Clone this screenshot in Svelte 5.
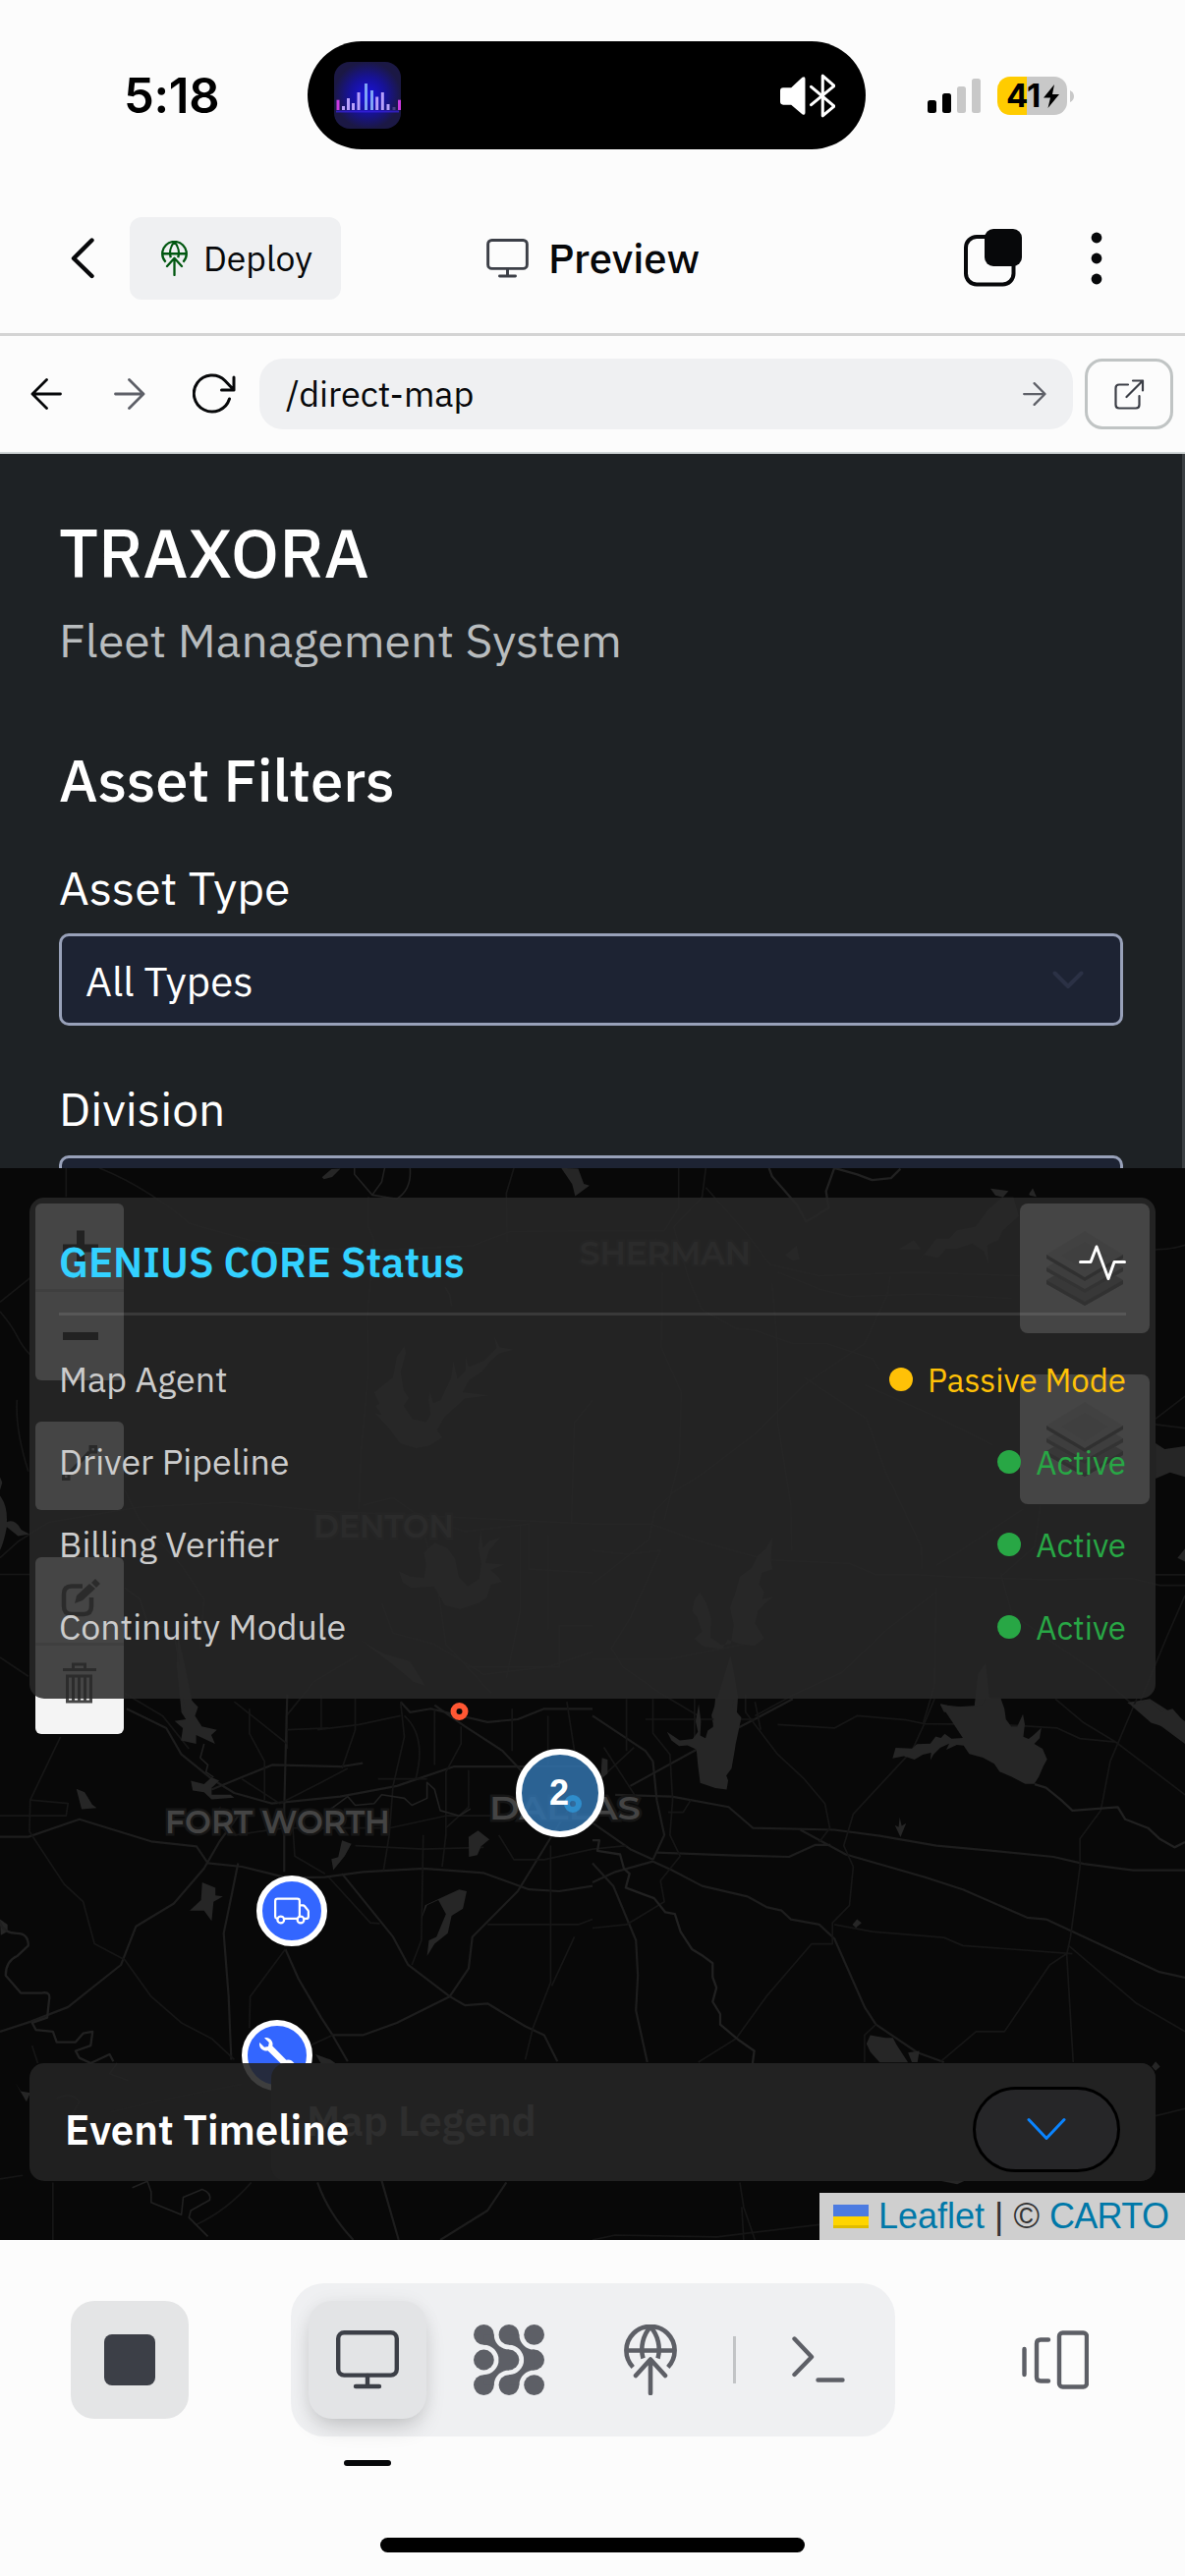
<script>
  const modules = [
    { name: 'Map Agent', state: 'Passive Mode', tone: 'passive' },
    { name: 'Driver Pipeline', state: 'Active', tone: 'active' },
    { name: 'Billing Verifier', state: 'Active', tone: 'active' },
    { name: 'Continuity Module', state: 'Active', tone: 'active' }
  ];

  // Equalizer bars of the playing app: [x, top]
  const bars = [
    [4, 38.7], [9.5, 45], [14.5, 37], [19.5, 42], [25, 31], [32.5, 22],
    [38.5, 29], [43.7, 35.5], [49.3, 31], [55, 43], [61, 46], [66.5, 38.7]
  ];
</script>

{#snippet monitor(cls, sw)}
  <svg class={cls} viewBox="0 0 64 60" fill="none" stroke="currentColor" stroke-width={sw} stroke-linecap="round">
    <rect x="2.2" y="2.2" width="59.6" height="43.4" rx="6" />
    <path d="M32 46v11M20 57h24" />
  </svg>
{/snippet}

{#snippet globe(cls, sw)}
  <svg class={cls} viewBox="0 0 54 72" fill="none" stroke="currentColor" stroke-width={sw} stroke-linecap="round" stroke-linejoin="round">
    <path d="M9.2 43.5A24.6 24.6 0 1 1 44.8 43.5" stroke-linecap="butt" />
    <path d="M2.5 26.5h49M19.5 34.5C16.5 24 19 11 27 2.500C35 11 37.500 24 34.500 34.500" stroke-linecap="butt" />
    <path d="M27 70V36M12 52l15-16.500L42 52" />
  </svg>
{/snippet}

{#snippet layers()}
  <svg class="layers" viewBox="0 0 78 78">
    <path d="M0 51l39-23 39 23v4L39 77 0 55z" fill="#999" />
    <path d="M0 51v4l39 22 39-22v-4L39 73z" fill="#6d6d6d" />
    <path d="M0 38l39-23 39 23v4L39 64 0 42z" fill="#c4c4c4" />
    <path d="M0 38v4l39 22 39-22v-4L39 60z" fill="#777" />
    <path d="M0 25L39 1l39 24v3L39 52 0 28z" fill="#ddd" />
    <path d="M39 12l24 14-24 15-24-15z" fill="#c9c9c9" />
    <path d="M0 25v4l39 23 39-23v-4L39 48z" fill="#666" />
  </svg>
{/snippet}

<div class="phone">
  <div class="status">
    <div class="time">5:18</div>
    <div class="island">
      <svg class="eq" viewBox="0 0 68 68">
        <defs>
          <radialGradient id="glow">
            <stop offset="0" stop-color="#1a12e0" />
            <stop offset=".55" stop-color="#171296" />
            <stop offset="1" stop-color="#1b1844" />
          </radialGradient>
        </defs>
        <rect width="68" height="68" rx="16" fill="url(#glow)" />
        <path d="M2 50.500h64" stroke="#3a22e8" stroke-width="2" opacity=".7" />
        {#each bars as [x, top], i}
          <path d="M{x} {top}V49" stroke={i === 0 || i === 11 ? '#c93ae0' : i === 5 || i === 6 ? '#7fa4f5' : '#b7a0fa'} stroke-width="3" stroke-opacity={i === 10 ? 0.3 : 1} />
        {/each}
      </svg>
      <svg class="audio" viewBox="0 0 56 44">
        <path d="M4 14h8L23 3.500q3-1.500 3 1.500v34q0 3-3 1.500L12 31H4q-3 0-3-3V17q0-3 3-3z" fill="#fff" />
        <path d="M32 13l23 19.500L43.500 42V2L55 12 32 31" fill="none" stroke="#fff" stroke-width="3" stroke-linejoin="round" stroke-linecap="round" />
      </svg>
    </div>
    <div class="power">
      <svg class="signal" viewBox="0 0 54 36">
        <rect y="22" width="9" height="13" rx="2.500" />
        <rect x="15" y="15" width="9" height="20" rx="2.500" />
        <rect x="30" y="8" width="9" height="27" rx="2.500" fill="#c8c8c8" />
        <rect x="45" width="9" height="35" rx="2.500" fill="#c8c8c8" />
      </svg>
      <div class="battery">
        <span>41</span>
        <svg class="bolt" viewBox="0 0 16 24"><path d="M11 0L0 13.500h7L4.500 24 16 10H9z" /></svg>
      </div>
      <svg class="nub" viewBox="0 0 4 12"><path d="M0 0q4 2 4 6t-4 6z" fill="#c8c8c8" /></svg>
    </div>
  </div>

  <header class="header">
    <svg class="back" viewBox="0 0 24 42"><path d="M21.500 2.500L3 21l18.500 18" /></svg>
    <button class="deploy">{@render globe('globe-sm', 4.6)}<span>Deploy</span></button>
    <div class="title">{@render monitor('mon-sm', 4.4)}<span>Preview</span></div>
    <svg class="windows" viewBox="0 0 60 60">
      <rect x="3" y="8" width="48.500" height="48.500" rx="11" fill="none" stroke="#07080a" stroke-width="4" />
      <rect x="22" y="0" width="38" height="38" rx="9" fill="#07080a" />
    </svg>
    <svg class="dots" viewBox="0 0 12 54"><circle cx="6" cy="6" r="5.400" /><circle cx="6" cy="27" r="5.400" /><circle cx="6" cy="48" r="5.400" /></svg>
  </header>

  <nav class="nav">
    <svg class="arrow" viewBox="0 0 32 32"><path d="M16.500 1.500L2 16l14.500 14.500M2 16h28.500" /></svg>
    <svg class="arrow muted fwd" viewBox="0 0 32 32"><path d="M15.500 1.500L30 16 15.500 30.500M30 16H1.500" /></svg>
    <svg class="reload" viewBox="0 0 44 42"><path d="M37.500 26A18.500 18.500 0 1 1 33 7.500L42 17M42 4v13H29.500" /></svg>
    <div class="url"><span>/direct-map</span>
      <svg class="go" viewBox="0 0 32 32"><path d="M15.500 1.500L30 16 15.500 30.500M30 16H1.500" /></svg>
    </div>
    <button class="open" aria-label="Open in new tab">
      <svg viewBox="0 0 31 31"><path d="M14 5.500H5q-3.500 0-3.500 3.500v17q0 3.500 3.500 3.500h17q3.500 0 3.500-3.500V17M12.500 18L29 1.500M19 1.500h10v10" /></svg>
    </button>
  </nav>

  <section class="filters">
    <h1>TRAXORA</h1>
    <p class="sub">Fleet Management System</p>
    <h2>Asset Filters</h2>
    <div class="label type">Asset Type</div>
    <div class="select"><span>All Types</span>
      <svg viewBox="0 0 32 20"><path d="M2.500 2.500L16 16 29.500 2.500" /></svg>
    </div>
    <div class="label division">Division</div>
    <div class="select second"></div>
  </section>

  <section class="map">
    <svg class="tiles" viewBox="0 0 1206 1091">
      <!-- northern half, west -->
      <g transform="translate(0 -9) scale(.3846 .3827)">
        <g class="road">
          <path d="M262 23Q330 50 400 95T500 170L660 215 960 245 1250 230 1350 192 1568 190" />
          <path d="M0 380L80 315M0 405Q30 440 45 470T80 520M175 23V100" />
          <path d="M975 100V180L990 215 972 420 975 560 955 780 950 930M1360 23L1340 90 1342 220M1568 640L1520 700 1512 970" />
          <path d="M0 1060L50 1015 130 965 370 925 620 912 850 935 1568 970M330 880L370 960 480 1080 540 1170 530 1300" />
          <path d="M960 920L1040 900 1110 950 1230 990 1400 970 1400 1090 1568 1100" />
          <path d="M0 1104H80M0 1325L75 1375M45 640Q40 720 75 830M330 1420L430 1480 500 1568M760 1568L758 1480 830 1390 945 1320" />
          <path d="M1010 1180L1040 1260 1150 1290 1280 1370 1450 1350 1568 1310M1115 960L1160 1150 1180 1290 1300 1420M1377 970V1200L1340 1380M1450 1000V1250M1235 1350H1480V1240H1568" />
        </g>
        <g class="water">
          <path d="M852 48l25-22 24-1-22 22-22 6zM1485 23l45 2 15 40 15 5-38 28-8-32z" />
          <path d="M0 845l6 15-6 20zM0 895q20 25 18 70 22-10 38 20l22 12-30 5-30-24Q10 1020 0 1040z" />
          <path d="M1040 580l10-55 20-28 4 18-14 50 8 50 14 20-14 20 24 36 36 8 12-20-6-40 4-20 8 30 20-8 28-60 6-45 10 48 22-22 0-40 8 30 40-16 34-34-6-30 14 28 36 6-36 10-24 20-24 30-32 20-18 34 70 8-64 8-54 50-20 34 14 20-34 22-36 6-40-12-38-50-30-30 18 4-16-24 10-6-14-30z" />
          <path d="M1150 1020l34 14 20 28 10 50 24 24 30-20 6-40-8-40 6-50 6 48 16-18 30-10-30 34-10 34 50 4-36 14 20 18 10 14-30 8-10 34-20 14-50 16-40-10-30-50-60 4-22-14-10-30 30 14 36 4 6-34-6-34z" />
          <path d="M955 1280l60 35 70 20 40 65-30-10-60-50z" />
          <path d="M470 1260l20 90 20 100-10 50-20-30-12-120z" />
        </g>
        <path class="stream" d="M938 23V40L985 95 1010 60 1018 23M1085 23Q1090 80 1050 105L985 95M330 1140l40 30 20 60 70 25 15 90" />
        <path class="stream" d="M1178 340l12 20 5 30" />
      </g>
      <!-- northern half, east -->
      <g transform="translate(603 -9) scale(.3846 .3827)">
        <g class="road">
          <path d="M228 23V130L190 190H0M300 23L290 100 215 180 255 320 290 400 380 450 430 455 530 490 620 490 740 530 760 560" />
          <path d="M300 75L410 200 470 280 600 310 850 300 1130 310M490 300L600 345 680 365 880 358 1110 370" />
          <path d="M788 310L780 360 720 490 560 600 430 730 300 830 215 885 165 935 150 1010 0 1130M185 300L182 500 235 620 230 800 190 960" />
          <path d="M475 330L490 500 490 700 525 920 527 1040M560 580L680 660 725 690 775 830 870 1030 872 1090" />
          <path d="M0 970H155L280 1015 460 1065 680 1075 750 1105 860 1105 950 1110 1200 1118 1430 1115 1500 1133H1568" />
          <path d="M720 600L920 690 1060 760M1490 690L1568 630M1490 705L1568 715M1490 1105H1568M1490 240Q1530 240 1568 228" />
          <path d="M0 1040L90 1050 180 1040 100 1220 50 1300 80 1350 180 1420 280 1480" />
          <path d="M910 1080L960 1050 1140 930M910 1140L905 1400 875 1500M910 1150L780 1250 660 1365 540 1420 430 1480M1185 920L1170 1030 1080 1110" />
          <path d="M1080 1100L1110 1210 1340 1370 1440 1460M1568 1160L1520 1270 1450 1440M0 1330H200L400 1290" />
        </g>
        <g class="water">
          <path d="M1053 78l48 6-15 17-20-5zM1155 92l10-15 10 23-18-4z" />
          <path d="M860 275l40-50 10-14 34 0 20-22 50-10 30-42 40-36 30 0 14 50-44 40-10 24-30 14 5 50-14-35-30-20-40 14-30 0-20 24-40-8zM810 240l40-25 20 25z" />
          <path d="M510 255l30-25 8 35-18 5z" />
          <path d="M376 1160l14-50 30-22 18-34 20-18 18-30-4 60 4 24-28 10-8 30 14 20-4 20 28-6-20 16-20 20-8 34 24 40-26 20-40-6-30-10-14 24-50-6-24-20 20-20-14-40-12-14 6-30 14-20 18 30 12 40-2 50 30 20 24-4 8-50-10-44 6-20z" />
          <path d="M1490 755l24 16 54-8v82l-40-12-38 16zM1548 1060l20-25v35z" />
          <path d="M365 1320l10 50 10 60-10 138h-45l-15-90 20-60z" />
          <path d="M920 1450l90 10 10-90 20-30 10 90 30 30 10 108H1000l-10-90-60-8zM1415 1445l60-10 93 60v60l-80-60z" />
        </g>
        <path class="stream thick" d="M467 23L475 45 540 120 565 165 625 130 618 85 640 23M640 23L700 40 740 55 790 50 815 25" />
      </g>
      <!-- southern half, west -->
      <g transform="translate(0 536) scale(.3846 .35714)">
        <g class="road major">
          <path d="M0 405H75L210 355 400 418 520 432 550 480 640 490 760 522 860 520 960 505 1120 495 1280 508 1400 555 1480 560 1568 545" />
          <path d="M0 960L80 932 180 890 320 770 360 660 460 595 540 495 580 420 640 330" />
          <path d="M335 40L440 95 480 170 560 240 620 280 720 310 900 290 1050 260 1200 205H1568M560 270L720 200 900 205 960 195" />
          <path d="M760 0L755 200 752 330 752 505M630 480L615 560 592 680 605 860 612 1040" />
          <path d="M905 510L1040 690 1080 770 1190 860 1230 885 1290 880 1390 945 1440 970 1475 1045" />
          <path d="M1190 860L1050 935 960 970 880 970M755 725L790 810 850 920 880 970 920 1045" />
          <path d="M1190 860L1240 780 1250 690 1370 560 1450 420 1520 300M1060 20L1085 50 1140 40 1290 78 1370 70 1440 40H1568M1150 30L1230 90 1330 160 1400 240" />
          <path d="M1010 1385L1055 1554M1340 1390L1290 1470 1165 1554M840 1390Q870 1480 935 1554" />
        </g>
        <g class="road">
          <path d="M160 120L80 300 78 390 170 540 220 590 250 710 330 755 400 860 480 935 560 980 620 1040" />
          <path d="M80 300L180 310 175 345 0 345M660 950L662 860 755 725M620 20L760 140M940 10L940 100 905 210M1060 20L1070 120 1040 260 1030 400 1015 500" />
          <path d="M850 0V100M840 100L950 85 1060 60M660 40V110L700 190 700 300M1150 40V200M1220 90V140L1180 220V400L1170 490M1355 160V40M1500 20L1520 160 1568 200" />
          <path d="M775 380L780 460 860 510M870 520L980 650 1005 652M1120 400L1115 700 1090 770M1290 655H1530L1568 640M1320 400L1360 470 1440 470 1568 440M940 430L1120 440 1280 435M620 400L752 380 1030 380 1180 345H1568" />
          <path d="M1457 430V820L1410 950 1390 1040M1460 830L1520 690M1070 60Q1130 120 1100 240M760 100L870 95M1000 240H1130M1240 215V320L1180 380M1450 60V200M640 240L740 310 850 250 920 210" />
          <path d="M140 1390V1554M0 1380L60 1370M85 1000L100 1050M665 1390Q600 1470 520 1510" />
          <path d="M290 1190L450 1150 640 1110M820 1000L880 970" />
        </g>
        <g class="water">
          <path d="M480 0l10 30-10 20 12 20-30 5 22 20-5 35 40 10 0-25 50 25-10-25 15-15-40-10-18-30 8-25-18-20z" />
          <path d="M505 245l35 10 20-20 20 10-20 20 0 20 50 0 10 8-60 5-20-20-30-5z" />
          <path d="M202 268l22 10 20 35 12 10-40 3z" />
          <path d="M535 535l35 15 0 22 20 3-25 15-5 55-20-30-38 0 30-30z" />
          <path d="M905 415l25 10-18 35-30 40-5-32 18-5z" />
          <path d="M1240 405l25-18 30 25-22 20-10 25-22 5z" />
          <path d="M1115 640l10-40 60-30 30-15 20 5-10 50-30 20-10 50-35 30-20 35 5-45 20-10 25-65-20-40-30 15z" />
          <path d="M835 1025l40 15 15 12h-40z" />
          <path d="M0 640l20 15 0 20-18 10zM40 1105l15 25 25 5-10 25z" />
        </g>
        <path class="stream thick" d="M0 650Q10 680 45 680 75 680 75 715L45 745Q15 760 15 800L55 850 110 850Q135 845 130 870L125 920 85 935 95 955 140 960 150 990 200 990 220 965 245 960 240 1000 200 1015 210 1035 240 1050 290 1025 300 1045" />
        <path class="stream" d="M540 140l-10 40 20 20-5 20 20 15M870 330l50-40 20 25 50-5 20-25 60 10 20 20 40-20 0-45 20 20 15 60 50 15 30-20" />
        <path class="stream" d="M350 1405l40-18 10 30 0 30 80 35 5-50 50-22q25 10 20 30l-50 30-5 20 50 54" />
        <path class="stream" d="M150 1150q40-20 60 10l-20 40 60 20M340 1100l-50-20 20-30" />
      </g>
      <!-- southern half, east -->
      <g transform="translate(603 536) scale(.3846 .35714)">
        <g class="road major">
          <path d="M0 60L140 160 160 190 170 300 190 400 160 470M0 535L60 505 160 475 210 500 290 545 410 575 460 605 500 615 525 640 600 655 640 695 720 890 750 940 860 1020 930 1047" />
          <path d="M60 285L210 290 360 320 425 380 640 385 760 402 910 430 1060 445 1220 462 1300 482 1430 500H1568" />
          <path d="M170 450L380 458 520 462 590 428 630 428M550 385L670 455 880 520 980 555 1150 635 1200 640 1330 705 1500 790 1568 806" />
          <path d="M0 480L55 545 115 700 120 800 115 900 145 1047M100 260L260 165 420 75 530 12M0 365L100 440 160 470" />
        </g>
        <g class="road">
          <path d="M405 0V50L490 170 560 240 615 310 628 380 600 420M905 12L875 90 845 160 690 340 665 430 690 490 680 600 635 650V710L580 710 460 860 380 980 280 1047" />
          <path d="M430 20L445 100M490 85L640 95 700 60 830 72 880 83 1080 85 1230 95 1290 125 1385 135M1225 12L1300 80 1385 135 1568 285" />
          <path d="M1440 12L1370 190 1345 330 1290 410 1290 490 1265 690 1255 740 1272 1047M640 655L740 675 930 692 980 715 1270 738M1255 738L1210 770 1090 960 1015 960 920 1047M1260 715L1440 880 1568 960" />
          <path d="M90 12V160M160 12V110L205 170 212 300 205 400 232 460 180 530 190 590 90 655 0 665M140 70H430M720 1047V970L750 940M30 150L120 300M0 440L90 430M200 335H240L260 300M270 12V150M0 260L110 150" />
          <path d="M390 1390L400 1460 430 1554M0 1554L60 1540 330 1545 600 1510M1490 1200L1568 1180M395 1460L400 1554" />
        </g>
        <g class="water">
          <path d="M325 10h50l-5 25 24 30-15 75-3 20-8 50-14 20 5 14-4 26-30-4-40-15-6-50-4-45-24-12-22 2-20-16-12-24 34 24 34-4 14-20-6-30 8-50 6 50-2 40 14 8 6-22 14-10z" />
          <path d="M25 180l15 5 0 40-18 15z" />
          <path d="M920 25l35 10 75-5 10-20h40l10 30 4 30 14 20 16 0 15-35 5 30-4 35 14 6 14-12 20-20-5 30-14 16 22 14 12 30-10 20-12 30-12 20-24 0-36-20-32-15-14-22-30-18-36-10-15-24-18-2-28 14 8-18-24 12-18 20-8 16 2-22-22 6-22 14-28-10-30 6 8-30 44 2 12-12 36-2 14-20 14 4 10-12 18 14 30-2z" />
          <path d="M1425 30l50-15 30 35 30-10 33 40v50l-60-40-30-10z" />
          <path d="M800 372l10 5 3-28 5 25 12-8-15 40zM688 655l12-15 12 10-15 14z" />
          <path d="M725 995l10-25 40 8 20 0 10 20 30 50h-75l-25-30zM835 1020l30-5-5 32h-15z" />
          <path d="M1480 1060l10-15 12 15-12 12zM920 1385h65l-20 10z" />
        </g>
        <path class="stream thick" d="M0 415l18 0-5 30 60 10 10 40 15 15-10 40 50 20 25 10 30 40 25 5 15 50 30 50 30 20 25 20 0 40 10 30-10 40 20 35 0 30 50 45 40 30-5 40-20 20" />
        <path class="stream thick" d="M1170 255l30 10 40 35 30 30 60-5 60-5 20 35 60 25 30 30 40 25 28-15" />
      </g>
      <g class="city">
        <text x="590" y="98" textLength="174" lengthAdjust="spacingAndGlyphs">SHERMAN</text>
        <text x="319" y="376" textLength="143" lengthAdjust="spacingAndGlyphs">DENTON</text>
        <text x="168" y="677" textLength="229" lengthAdjust="spacingAndGlyphs">FORT WORTH</text>
        <text x="498" y="663" textLength="154" lengthAdjust="spacingAndGlyphs" font-size="37">DALLAS</text>
      </g>
      <circle cx="467.500" cy="553" r="6" fill="none" stroke="#ff5733" stroke-width="6" />
    </svg>

    <div class="marker cluster"><i></i><span>2</span></div>
    <div class="marker truck">
      <svg viewBox="0 0 16 16"><path d="M0 3.500A1.500 1.500 0 0 1 1.500 2h9A1.500 1.500 0 0 1 12 3.500V5h1.020a1.500 1.500 0 0 1 1.170.563l1.481 1.850a1.500 1.500 0 0 1 .329.938V10.500a1.500 1.500 0 0 1-1.500 1.500H14a2 2 0 1 1-4 0H5a2 2 0 1 1-3.998-.085A1.500 1.500 0 0 1 0 10.500zm1.294 7.456A2 2 0 0 1 4.732 11h5.536a2 2 0 0 1 .732-.732V3.500a.5.5 0 0 0-.5-.5h-9a.5.5 0 0 0-.5.5v7a.5.5 0 0 0 .294.456M12 10a2 2 0 0 1 1.732 1h.768a.5.5 0 0 0 .5-.5V8.350a.5.5 0 0 0-.11-.312l-1.480-1.850A.5.5 0 0 0 13.020 6H12zm-9 1a1 1 0 1 0 0 2 1 1 0 0 0 0-2m9 0a1 1 0 1 0 0 2 1 1 0 0 0 0-2" /></svg>
    </div>
    <div class="marker wrench">
      <svg viewBox="0 0 16 16"><path fill-rule="evenodd" d="M.102 2.223A3.004 3.004 0 0 0 3.780 5.897l6.341 6.252A3.003 3.003 0 0 0 13 16a3 3 0 1 0-.851-5.878L5.897 3.781A3.004 3.004 0 0 0 2.223.1l2.141 2.142L4 4l-1.757.364zM13 11.500a1.500 1.500 0 1 1 0 3 1.500 1.500 0 0 1 0-3" /></svg>
    </div>

    <div class="controls left">
      <div class="box">
        <div class="cell"><svg viewBox="0 0 90 87"><path d="M28 45.500h36M46 27.500v36" stroke="#000" stroke-width="8" /></svg></div>
        <div class="cell"><svg viewBox="0 0 90 90"><path d="M28 45h36" stroke="#000" stroke-width="8" /></svg></div>
      </div>
      <div class="box">
        <div class="cell"><svg viewBox="0 0 90 90"><path d="M35 52l20-21" stroke="#333" stroke-width="3.500" /><path d="M28.500 53h5.500v5.500h-5.500zM56 25.500h5.500v5.500H56z" fill="none" stroke="#333" stroke-width="3" /></svg></div>
      </div>
      <div class="box">
        <div class="cell"><svg viewBox="0 0 90 87"><path d="M48 29.500H37q-8 0-8 8V50q0 8 8 8h12q8 0 8-8v-9" fill="none" stroke="#444" stroke-width="4.500" /><path d="M40 47l2-8 13-12 6 5-13 12zM57 26l4-4 5 5-4 4z" fill="#444" /></svg></div>
        <div class="cell"><svg viewBox="0 0 90 90"><path d="M28 24.500h34M38.500 23v-4h12v4" fill="none" stroke="#464646" stroke-width="3" /><path d="M32.500 31h24v26h-24z" fill="none" stroke="#464646" stroke-width="3" /><path d="M38.500 31v26M44.500 31v26M50.500 31v26" stroke="#464646" stroke-width="3" /></svg></div>
      </div>
    </div>
    <div class="controls right">
      <div class="box big">{@render layers()}</div>
      <div class="box big">{@render layers()}</div>
    </div>

    <div class="core">
      <div class="core-head">
        <h3>GENIUS CORE Status</h3>
        <svg class="pulse" viewBox="0 0 48 36"><path d="M1.500 17.500H12L18 2 30 34.500 36 17.500H46.500" /></svg>
      </div>
      <div class="rows">
        {#each modules as m}
          <div class="row"><span class="name">{m.name}</span><span class="state {m.tone}"><i></i>{m.state}</span></div>
        {/each}
      </div>
    </div>

    <div class="legend">Map Legend</div>
    <div class="timeline">
      <h3>Event Timeline</h3>
      <button aria-label="Expand timeline"><svg viewBox="0 0 40 24"><path d="M2 2.500L20 21.500 38 2.500" /></svg></button>
    </div>
    <div class="credit">
      <svg viewBox="0 0 36 24"><path fill="#4c7be1" d="M0 0h36v12H0z" /><path fill="#ffd500" d="M0 12h36v9H0z" /><path fill="#e0bc00" d="M0 21h36v3H0z" /></svg>
      <a href="#leaflet">Leaflet</a>&nbsp;<b>|</b>&nbsp;©&nbsp;<a class="carto" href="#carto">CARTO</a>
    </div>
  </section>

  <footer class="footer">
    <div class="bar">
      <button class="tile" aria-label="Stop"><i></i></button>
      <div class="tabs">
        <button class="tile selected" aria-label="Preview">{@render monitor('mon', 4.4)}</button>
        <svg class="mesh" viewBox="0 0 72 72" fill="currentColor">
          {#each [10.4, 36, 61.6] as cx}
            {#each [10.4, 36, 61.6] as cy}
              <circle {cx} {cy} r="10.400" />
            {/each}
          {/each}
          {#each [0, 25.6] as dx}
            <path transform="translate({dx} 0)" d="M20.800 10.400C20.800 19 28 25.600 36 25.600V46.400C28 46.400 20.800 53 20.800 61.600H10.400V51.200C19 51.200 25.600 44 25.600 36S19 20.800 10.400 20.800V10.400Z" />
          {/each}
        </svg>
        {@render globe('globe', 4.6)}
        <i class="sep"></i>
        <svg class="term" viewBox="0 0 54 48"><path d="M2.500 2.500L20 21 2.500 39M26.500 44.500H51.500" /></svg>
      </div>
      <svg class="panes" viewBox="0 0 68 60"><path d="M2.500 19v26M27 9.500H19q-4 0-4 4v34q0 4 4 4h8" /><rect x="38" y="2.500" width="28" height="55" rx="3.500" /></svg>
    </div>
    <i class="current"></i>
    <i class="home"></i>
  </footer>
</div>

<style>
  :global(body) { margin: 0; background: #fcfcfc; }
  .phone {
    width: 1206px;
    height: 2622px;
    overflow: hidden;
    background: #fcfcfc;
    color: #07080a;
    font-family: 'IBM Plex Sans', 'Open Sans', sans-serif;
  }
  .phone :global(*) { box-sizing: border-box; }
  h1, h2, h3, p { margin: 0; }
  button { padding: 0; border: 0; font: inherit; color: inherit; }
  svg { display: block; flex: none; }

  .status { display: grid; grid-template-columns: 313px 568px 1fr; height: 152px; padding-top: 42px; }
  .time { padding-left: 126px; font: 600 49px/112px Inter, sans-serif; letter-spacing: -0.3px; color: #000; }
  .island { display: flex; justify-content: space-between; align-items: center; height: 110px; padding: 0 31px 0 27px; border-radius: 55px; background: #000; }
  .eq { width: 68px; height: 68px; }
  .audio { width: 57px; height: 45px; }
  .power { display: flex; align-items: center; height: 111px; padding-left: 63px; }
  .signal { width: 54px; height: 36px; }
  .battery {
    display: flex; align-items: center; width: 71px; height: 39px; margin-left: 17px; padding-left: 9px; border-radius: 13px;
    background: linear-gradient(90deg, #fc0 0 30px, #c8c8c8 30px);
    font: 700 33px/39px Inter, sans-serif; letter-spacing: 0; color: #000;
  }
  .bolt { width: 16px; height: 24px; margin-left: 3px; }
  .nub { width: 4px; height: 12px; margin-left: 3px; }

  .header { display: flex; align-items: center; height: 190px; padding: 69px 0 34px 72px; border-bottom: 3px solid #d4d4d4; }
  .back { width: 24px; height: 42px; fill: none; stroke: #07080a; stroke-width: 4.4; stroke-linecap: round; stroke-linejoin: round; }
  .deploy { display: flex; align-items: center; width: 215px; height: 84px; margin-left: 36px; padding-left: 32px; border-radius: 12px; background: #eff0f2; font-size: 35.5px; line-height: 84px; }
  .deploy span { margin: -1px 0 0 16px; }
  .deploy :global(.globe-sm) { width: 27px; height: 36px; color: #005710; }
  .title { display: flex; align-items: center; width: 221px; margin-left: 148px; font-weight: 500; font-size: 42px; line-height: 84px; }
  .title span { margin: -1px 0 0 20px; }
  .title :global(.mon-sm) { width: 43px; height: 40px; color: #3c3f47; }
  .windows { width: 60px; height: 60px; margin-left: 264px; }
  .dots { width: 12px; height: 54px; margin-left: 70px; fill: #07080a; }

  .nav { display: flex; align-items: center; height: 120px; padding: 23px 12px 23px 31px; border-bottom: 2px solid #d0d6d6; }
  .arrow, .reload, .go, .open svg { fill: none; stroke: #07080a; stroke-width: 2.8; stroke-linecap: round; stroke-linejoin: round; }
  .arrow { width: 32px; height: 32px; }
  .arrow.muted { stroke: #5e6068; }
  .arrow.fwd { margin-left: 53px; }
  .reload { width: 44px; height: 42px; margin-left: 48px; stroke-width: 3; }
  .url { display: flex; align-items: center; justify-content: space-between; width: 828px; height: 72px; margin-left: 24px; padding: 0 27px 2px 27px; border-radius: 24px; background: #eff0f2; font-size: 36px; letter-spacing: -0.05px; }
  .go { width: 24px; height: 24px; margin-top: 2px; stroke: #5e6068; stroke-width: 3; }
  .open { display: flex; align-items: center; justify-content: center; width: 90px; height: 72px; margin-left: 12px; border: 3px solid #c0c4c4; border-radius: 18px; background: none; }
  .open svg { width: 31px; height: 31px; stroke: #3c3f47; stroke-width: 2.2; }

  .filters { height: 727px; padding: 58px 60px 0; border-right: 3px solid #3a3e41; background: #1e2225; color: #fff; overflow: hidden; }
  h1 { font-size: 69.5px; line-height: 84px; font-weight: 500; }
  .sub { margin-top: 11px; font-size: 48px; line-height: 72px; color: #b8bcbe; }
  h2 { margin-top: 71px; font-size: 60px; line-height: 72px; font-weight: 500; letter-spacing: -0.05px; }
  .label { font-size: 48px; line-height: 60px; }
  .type { margin-top: 43px; }
  .division { margin-top: 54px; }
  .select { display: flex; align-items: center; justify-content: space-between; height: 94px; margin-top: 17px; padding: 2px 37px 0 24px; border: 3px solid #98a1b9; border-radius: 10px; background: #1d2333; font-size: 42px; }
  .select.second { margin-top: 18px; }
  .select svg { width: 32px; height: 20px; fill: none; stroke: #2b3145; stroke-width: 4; stroke-linecap: round; stroke-linejoin: round; }

  .map { position: relative; height: 1091px; background: #080808; overflow: hidden; }
  .tiles { width: 1206px; height: 1091px; }
  .road path { fill: none; stroke: #161616; stroke-width: 1.7; stroke-linejoin: round; vector-effect: non-scaling-stroke; }
  .road.major path { stroke: #1d1d1d; stroke-width: 2.2; }
  .water path { fill: #262626; }
  .stream { fill: none; stroke: #212121; stroke-width: 1.6; stroke-linejoin: round; vector-effect: non-scaling-stroke; }
  .stream.thick { stroke-width: 2.3; }
  .city text { font-family: 'Montserrat', Inter, sans-serif; font-weight: 600; font-size: 34px; fill: #444; stroke: #161616; stroke-width: 5; paint-order: stroke; }

  .marker { position: absolute; display: flex; align-items: center; justify-content: center; width: 72px; height: 72px; border: 6px solid #fff; border-radius: 50%; background: #36f; }
  .marker svg { width: 36px; height: 36px; fill: #fff; }
  .truck { left: 261px; top: 720px; }
  .wrench { left: 246px; top: 867px; }
  .cluster { left: 525px; top: 591px; width: 90px; height: 90px; padding-right: 2px; background: rgba(49, 113, 170, 0.86); color: #fff; font: 700 36px/1 'Liberation Sans', sans-serif; }
  .cluster i { position: absolute; left: 43px; top: 41px; width: 18px; height: 18px; border: 6px solid #2f8dcb; border-radius: 50%; }
  .cluster span { position: relative; }

  .controls { position: absolute; top: 36px; display: flex; flex-direction: column; }
  .left { left: 36px; gap: 42px; }
  .left .box:nth-child(3) { margin-top: 6px; }
  .right { right: 36px; gap: 42px; }
  .box { width: 90px; border-radius: 6px; background: #f4f4f4; overflow: hidden; }
  .cell { height: 90px; }
  .cell:not(:last-child) { border-bottom: 3px solid #ccc; }
  .big { display: flex; align-items: center; justify-content: center; width: 132px; height: 132px; border-radius: 8px; }
  .layers { width: 78px; height: 78px; }

  .core { position: absolute; left: 30px; top: 30px; width: 1146px; height: 510px; padding: 0 30px; border-radius: 15px; background: rgba(40, 40, 40, 0.86); }
  .core-head { display: flex; align-items: center; justify-content: space-between; height: 120px; padding-top: 15px; border-bottom: 3px solid rgba(255, 255, 255, 0.1); }
  h3 { font-size: 42px; line-height: 60px; font-weight: 600; color: #fff; }
  .core h3 { color: #33d1ff; }
  .pulse { width: 48px; height: 36px; fill: none; stroke: #fff; stroke-width: 3; stroke-linecap: round; stroke-linejoin: round; }
  .rows { padding-top: 22px; }
  .row { display: flex; align-items: center; justify-content: space-between; height: 84px; font-size: 35.8px; color: #ccc; }
  .state { display: flex; align-items: center; padding-top: 2px; font-size: 33px; }
  .state i { width: 24px; height: 24px; margin-right: 15px; border-radius: 50%; background: currentColor; }
  .passive { color: #ffc107; }
  .active { color: #28a745; }

  .legend { position: absolute; left: 276px; top: 911px; width: 900px; height: 120px; padding-left: 36px; border-radius: 15px; background: #1d1d1d; color: #787878; font-weight: 600; font-size: 42px; line-height: 117px; }
  .timeline { position: absolute; left: 30px; top: 911px; display: flex; align-items: center; justify-content: space-between; width: 1146px; height: 120px; padding: 14px 36px 0 36px; border-radius: 15px; background: rgba(35, 35, 35, 0.88); }
  .timeline h3 { padding-top: 2px; }
  .timeline button { display: flex; align-items: center; justify-content: center; width: 150px; height: 87px; border: 3px solid #000; border-radius: 44px; background: #262628; }
  .timeline svg { width: 40px; height: 24px; fill: none; stroke: #0a84ff; stroke-width: 3; stroke-linecap: round; stroke-linejoin: round; }
  .credit { position: absolute; right: 0; bottom: 0; display: flex; align-items: center; width: 372px; height: 48px; padding-left: 14px; background: #cfcfcf; font: 36px/40px 'Liberation Sans', sans-serif; color: #333; white-space: pre; }
  .credit svg { width: 36px; height: 24px; margin-right: 10px; }
  .credit b { font-weight: 400; }
  .credit a { color: #0078a8; text-decoration: none; }
  .credit .carto { letter-spacing: -0.7px; }

  .footer { height: 342px; padding-top: 44px; }
  .bar { display: flex; align-items: center; padding-left: 72px; }
  .tile { display: flex; align-items: center; justify-content: center; width: 120px; height: 120px; border-radius: 24px; background: #e4e5e6; }
  .tile i { width: 52px; height: 52px; border-radius: 8px; background: #3c3f47; }
  .tabs { display: flex; align-items: center; width: 615px; height: 156px; margin-left: 104px; padding-left: 18px; border-radius: 34px; background: #eff0f2; color: #5d5f66; }
  .selected { background: #e3e4e6; box-shadow: 0 12px 24px -6px rgba(0, 0, 0, 0.2), 0 0 18px rgba(0, 0, 0, 0.05); }
  .selected :global(.mon) { width: 64px; height: 60px; color: #3c3f47; }
  .mesh { width: 72px; height: 72px; margin-left: 48px; }
  .tabs :global(.globe) { width: 54px; height: 72px; margin-left: 81px; }
  .sep { width: 3px; height: 48px; margin-left: 57px; background: #c2c4c6; }
  .term { width: 54px; height: 48px; margin-left: 57px; fill: none; stroke: #5d5f66; stroke-width: 4.400; stroke-linecap: round; stroke-linejoin: round; }
  .panes { width: 68px; height: 60px; margin-left: 129px; fill: none; stroke: #5d5f66; stroke-width: 4.400; stroke-linecap: round; }
  .current { display: block; width: 48px; height: 6px; margin: 24px 0 0 350px; border-radius: 3px; background: #07080a; }
  .home { display: block; width: 432px; height: 15px; margin: 73px auto 0; border-radius: 8px; background: #000; }
</style>
